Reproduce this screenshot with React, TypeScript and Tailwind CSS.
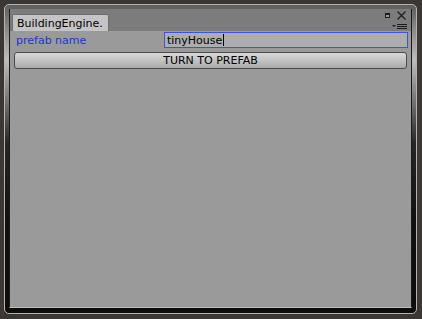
export default function App() {
    return (
        <div className="h-[319px] w-[422px] overflow-hidden bg-[#3a3734] pt-[4px] pr-[5px] pb-[5px] pl-[4px] font-['DejaVu_Sans',sans-serif]">
            {/* window frame */}
            <div className="h-full rounded-[5px] border border-[#b4b4b4] bg-[linear-gradient(to_bottom,#5c5c5c_0%,#8a8a8a_8%,#bdbdbd_18%,#7a7a7a_30%,#262626_45%,#101010_70%,#0c0c0c_100%)] px-[4px] pt-[4px] pb-[5px]">
                <div className="flex h-full flex-col border-x border-b border-x-[#1b1b1b] border-b-[#bcbcbc]">
                    {/* title bar */}
                    <div className="flex h-[22px] shrink-0 items-end bg-[#7c7c7c]">
                        <div className="ml-[2px] flex h-[17px] w-[97px] items-center rounded-t-[2px] border border-b-0 border-[#6e6e6e] bg-[#c4c4c4] pl-[4px] text-[11px] leading-none text-black">
                            BuildingEngine.
                        </div>
                        <div className="flex-1" />
                        <div className="relative h-full w-[30px]">
                            {/* maximise */}
                            <div className="absolute top-[4px] left-[4px] h-[5px] w-[5px] border border-t-2 border-[#1a1a1a] bg-[#9a9a9a]" />
                            {/* close */}
                            <svg
                                className="absolute top-[2px] left-[16px]"
                                width="9"
                                height="9"
                                viewBox="0 0 9 9"
                            >
                                <path d="M0.5 0.5 L8.5 8.5 M8.5 0.5 L0.5 8.5" stroke="#1a1a1a" strokeWidth="1.1" />
                            </svg>
                            {/* menu */}
                            <svg
                                className="absolute top-[15px] left-[11px]"
                                width="15"
                                height="5"
                                viewBox="0 0 15 5"
                            >
                                <path d="M0 1 L4 1 L2 3 Z" fill="#1a1a1a" />
                                <path d="M5 0.5 H15 M5 2.5 H15 M5 4.5 H15" stroke="#1a1a1a" strokeWidth="1" />
                            </svg>
                        </div>
                    </div>

                    {/* content */}
                    <div className="flex-1 bg-[#9a9a9a] pt-[1px] pr-[3px]">
                        <div className="flex h-[16px] items-center">
                            <span className="w-[154px] pl-[6px] text-[11px] leading-none text-[#1a38cf]">
                                prefab name
                            </span>
                            <div className="flex h-[16px] w-[244px] items-center border-[1.5px] border-[#3a55d6] bg-[#adadad] pl-[2px] text-[11px] leading-none text-black">
                                tinyHouse
                                <span className="ml-[1px] h-[12px] w-[1px] bg-black" />
                            </div>
                        </div>
                        <button className="mt-[4px] ml-[4px] flex h-[17px] w-[393px] items-center justify-center rounded-[3px] border border-[#4c4c4c] bg-[linear-gradient(to_bottom,#d8d8d8,#c2c2c2_50%,#a9a9a9)] text-[11px] leading-none text-black">
                            TURN TO PREFAB
                        </button>
                    </div>
                </div>
            </div>
        </div>
    );
}
